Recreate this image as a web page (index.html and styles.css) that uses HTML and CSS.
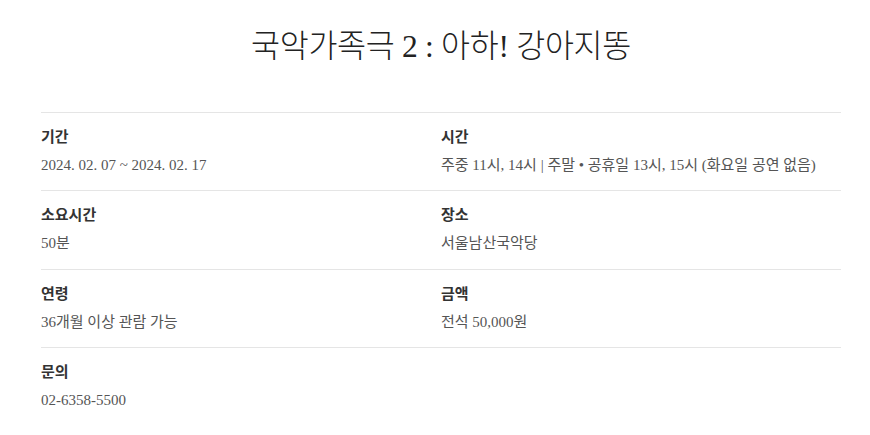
FILE: index.html
```html
<!DOCTYPE html>
<html lang="ko">
<head>
<meta charset="utf-8">
<link rel="stylesheet" href="styles.css">
</head>
<body>
<div class="page">
  <h1 class="title">국악가족극 2 : 아하! 강아지똥</h1>
  <div class="info">
    <div class="row">
      <div class="cell"><div class="label">기간</div><div class="value">2024. 02. 07 ~ 2024. 02. 17</div></div>
      <div class="cell"><div class="label">시간</div><div class="value">주중 11시, 14시 | 주말 • 공휴일 13시, 15시 (화요일 공연 없음)</div></div>
    </div>
    <div class="row">
      <div class="cell"><div class="label">소요시간</div><div class="value">50분</div></div>
      <div class="cell"><div class="label">장소</div><div class="value">서울남산국악당</div></div>
    </div>
    <div class="row">
      <div class="cell"><div class="label">연령</div><div class="value">36개월 이상 관람 가능</div></div>
      <div class="cell"><div class="label">금액</div><div class="value">전석 50,000원</div></div>
    </div>
    <div class="row">
      <div class="cell"><div class="label">문의</div><div class="value">02-6358-5500</div></div>
      <div class="cell"></div>
    </div>
  </div>
</div>
</body>
</html>
```

FILE: styles.css
```css
html, body {
  margin: 0;
  padding: 0;
  background: #fff;
}
body {
  font-family: "Liberation Serif", "Noto Sans CJK KR", serif;
  color: #333;
}
.page {
  width: 800px;
  margin-left: 41px;
}
.title {
  margin: 27px 0 0;
  height: 85px;
  line-height: 40px;
  font-size: 31.5px;
  font-weight: 300;
  text-align: center;
  color: #222;
  letter-spacing: -0.3px;
}
.row {
  display: flex;
  border-top: 1px solid #e5e5e5;
}
.cell {
  width: 400px;
  padding: 13px 0 15.3px;
}
.label {
  font-size: 15px;
  line-height: 22px;
  font-weight: 700;
  color: #333;
}
.value {
  margin-top: 7px;
  font-size: 15px;
  line-height: 20px;
  color: #555;
}
```
